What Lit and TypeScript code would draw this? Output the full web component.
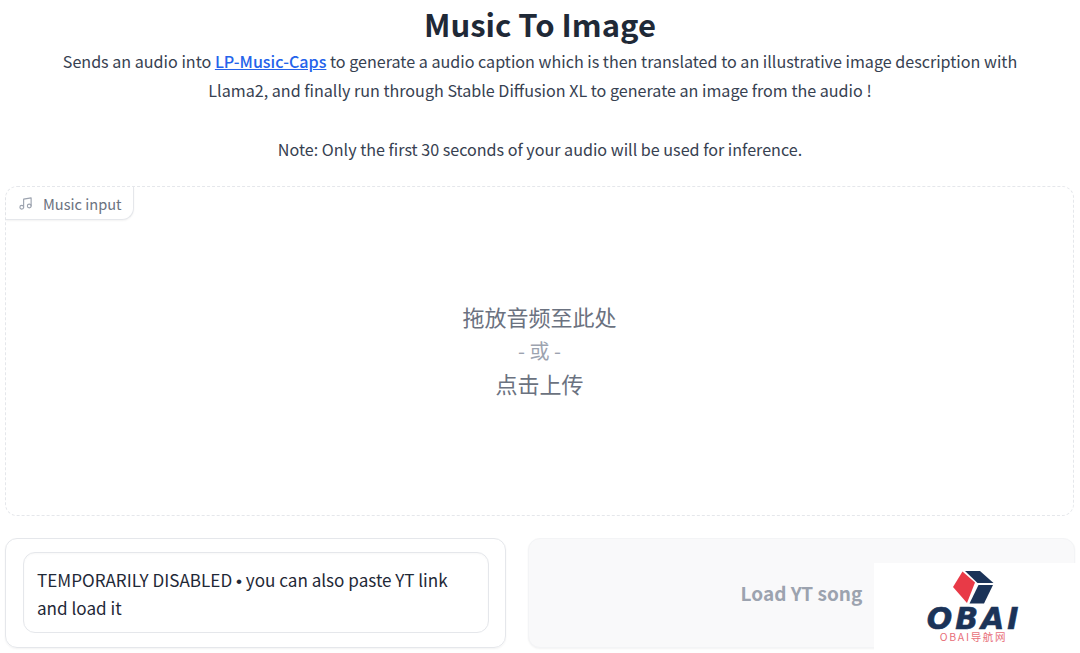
import { css, html, LitElement } from "lit";
import { customElement } from "lit/decorators.js";

/** Gradio-style "Music To Image" space: header, audio drop zone, YT row. */
@customElement("app-root")
export class AppRoot extends LitElement {
  private renderLogo() {
    return html`
      <div class="logo">
        <svg class="cube" width="41" height="33" viewBox="0 0 41 33">
          <path fill="#e83a47" d="M0 16 L9.500 0.500 L22 11.500 L14 32 Z" />
          <path fill="#1b3358" d="M12 0 L27 0 L40.500 12 L24.500 12 Z" />
          <path fill="#1b3358" d="M25.500 14 L40 14 L31 32.500 L16.500 32.500 Z" />
        </svg>
        <div class="logo-name">OBAI</div>
        <div class="logo-sub">OBAI导航网</div>
      </div>
    `;
  }

  protected override render() {
    return html`
      <div class="page">
        <header class="head">
          <h1>Music To Image</h1>
          <p>
            Sends an audio into <a href="#">LP-Music-Caps</a> to generate a audio caption which is
            then translated to an illustrative image description with<br />
            Llama2, and finally run through Stable Diffusion XL to generate an image from the audio !
          </p>
          <p class="note">Note: Only the first 30 seconds of your audio will be used for inference.</p>
        </header>

        <section class="drop">
          <div class="tab">
            <svg width="15" height="15" viewBox="0 0 24 24" fill="none" stroke="#9ca3af" stroke-width="1.8"
              stroke-linecap="round" stroke-linejoin="round">
              <path d="M9 18V5l12-2v13" />
              <circle cx="6" cy="18" r="3" />
              <circle cx="18" cy="16" r="3" />
            </svg>
            <span>Music input</span>
          </div>
          <div class="hint">
            <div>拖放音频至此处</div>
            <div class="or">- 或 -</div>
            <div>点击上传</div>
          </div>
        </section>

        <div class="row">
          <div class="box">
            <div class="field">
              TEMPORARILY DISABLED <span class="bullet">•</span> you can also paste YT link<br />and load it
            </div>
          </div>
          <div class="btn">Load YT song</div>
        </div>
        ${this.renderLogo()}
      </div>
    `;
  }

  static override styles = css`
    :host {
      display: block;
      font-family: "Noto Sans CJK SC", "Noto Sans", sans-serif;
      color: #374151;
      background: #fff;
    }

    .page {
      position: relative;
      height: 653px;
      box-sizing: border-box;
      overflow: hidden;
      padding: 0 5px;
    }

    .head {
      text-align: center;
      height: 186px;
    }

    h1 {
      margin: 0;
      padding-top: 2px;
      height: 45px;
      font-size: 31px;
      line-height: 44px;
      font-weight: 600;
      color: #1f2937;
    }

    p {
      margin: 0;
      font-size: 16.13px;
      line-height: 29px;
      color: #374151;
    }

    a {
      color: #2563eb;
      font-weight: 500;
      text-decoration: underline;
    }

    .note {
      margin-top: 30px;
    }

    .drop {
      position: relative;
      box-sizing: border-box;
      width: 1069px;
      height: 330px;
      padding-bottom: 2px;
      border: 1px dashed #e5e7eb;
      border-radius: 12px;
      display: flex;
      align-items: center;
      justify-content: center;
    }

    .tab {
      position: absolute;
      top: 0;
      left: 0;
      height: 33px;
      box-sizing: border-box;
      padding: 0 11px 0 12px;
      display: flex;
      align-items: center;
      gap: 10px;
      font-size: 14.6px;
      color: #6b7280;
      background: #fff;
      border-right: 1px solid #e5e7eb;
      border-bottom: 1px solid #e5e7eb;
      border-radius: 12px 0 12px 0;
      box-shadow: 0 1px 2px rgba(0, 0, 0, 0.05);
    }

    .hint {
      text-align: center;
      font-size: 22px;
      line-height: 33px;
      color: #6b7280;
    }

    .or {
      padding-top: 1px;
      font-size: 20px;
      color: #9ca3af;
    }

    .row {
      margin-top: 22px;
      display: flex;
      gap: 22px;
    }

    .box {
      box-sizing: border-box;
      width: 501px;
      height: 110px;
      padding: 13px 17px;
      border: 1px solid #e5e7eb;
      border-radius: 12px;
      box-shadow: 0 1px 2px rgba(0, 0, 0, 0.05);
    }

    .field {
      box-sizing: border-box;
      width: 466px;
      height: 81px;
      padding: 14px 13px;
      border: 1px solid #e5e7eb;
      border-radius: 12px;
      font-size: 17.1px;
      line-height: 26px;
      color: #1f2937;
      box-shadow: inset 0 1px 2px rgba(0, 0, 0, 0.03);
    }

    .bullet {
      font-family: "Liberation Sans", sans-serif;
    }

    .btn {
      box-sizing: border-box;
      width: 547px;
      height: 110px;
      padding-bottom: 2px;
      display: flex;
      align-items: center;
      justify-content: center;
      background: #f9f9fa;
      border: 1px solid #f3f4f6;
      border-radius: 12px;
      font-size: 19px;
      font-weight: 600;
      color: #9ca3af;
      box-shadow: 0 1px 2px rgba(0, 0, 0, 0.05);
    }

    .logo {
      position: absolute;
      left: 874px;
      top: 563px;
      width: 206px;
      height: 87px;
      background: #fff;
      display: flex;
      flex-direction: column;
      align-items: center;
    }

    .cube {
      margin-top: 8px;
      margin-left: -7px;
      flex: none;
    }

    .logo-name {
      margin-top: 3px;
      margin-left: -6px;
      font-family: "DejaVu Sans", sans-serif;
      font-size: 30px;
      line-height: 24px;
      height: 24px;
      font-weight: 700;
      font-style: italic;
      letter-spacing: 3px;
      color: #1b3358;
      -webkit-text-stroke: 0.6px #1b3358;
    }

    .logo-sub {
      margin-left: -7px;
      font-size: 10.5px;
      line-height: 12px;
      letter-spacing: 1.7px;
      color: #e8707a;
    }
  `;
}
